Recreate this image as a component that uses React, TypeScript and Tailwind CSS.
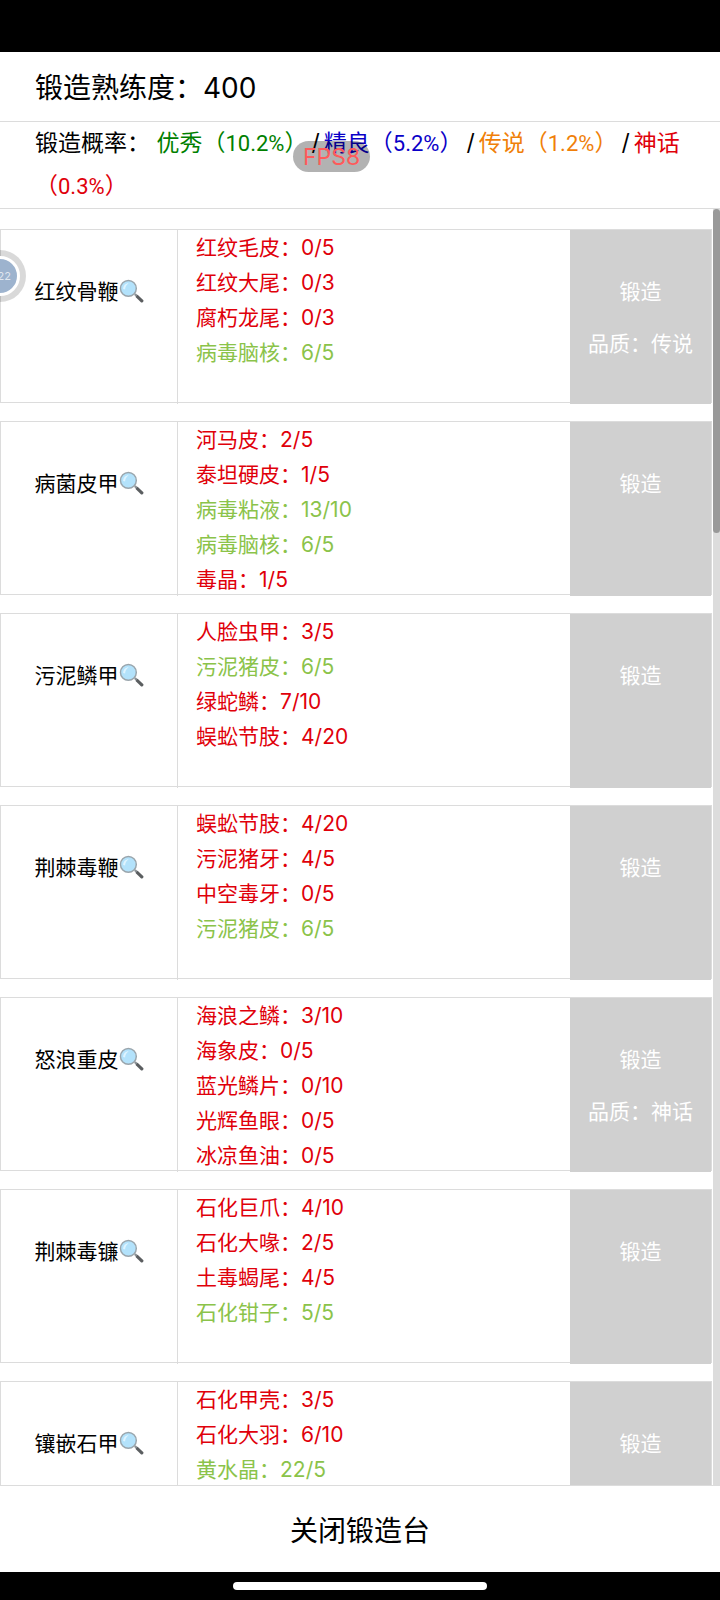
type Material = {
  name: string;
  have: number;
  need: number;
};

type Recipe = {
  name: string;
  quality?: string;
  materials: Material[];
};

const rates = [
  { label: '优秀', rate: '10.2%', color: 'text-[#008000]' },
  { label: '精良', rate: '5.2%', color: 'text-[#0a00c8]' },
  { label: '传说', rate: '1.2%', color: 'text-[#f07f09]' },
  { label: '神话', rate: '0.3%', color: 'text-[#e0000a]' },
];

const recipes: Recipe[] = [
  {
    name: '红纹骨鞭',
    quality: '传说',
    materials: [
      { name: '红纹毛皮', have: 0, need: 5 },
      { name: '红纹大尾', have: 0, need: 3 },
      { name: '腐朽龙尾', have: 0, need: 3 },
      { name: '病毒脑核', have: 6, need: 5 },
    ],
  },
  {
    name: '病菌皮甲',
    materials: [
      { name: '河马皮', have: 2, need: 5 },
      { name: '泰坦硬皮', have: 1, need: 5 },
      { name: '病毒粘液', have: 13, need: 10 },
      { name: '病毒脑核', have: 6, need: 5 },
      { name: '毒晶', have: 1, need: 5 },
    ],
  },
  {
    name: '污泥鳞甲',
    materials: [
      { name: '人脸虫甲', have: 3, need: 5 },
      { name: '污泥猪皮', have: 6, need: 5 },
      { name: '绿蛇鳞', have: 7, need: 10 },
      { name: '蜈蚣节肢', have: 4, need: 20 },
    ],
  },
  {
    name: '荆棘毒鞭',
    materials: [
      { name: '蜈蚣节肢', have: 4, need: 20 },
      { name: '污泥猪牙', have: 4, need: 5 },
      { name: '中空毒牙', have: 0, need: 5 },
      { name: '污泥猪皮', have: 6, need: 5 },
    ],
  },
  {
    name: '怒浪重皮',
    quality: '神话',
    materials: [
      { name: '海浪之鳞', have: 3, need: 10 },
      { name: '海象皮', have: 0, need: 5 },
      { name: '蓝光鳞片', have: 0, need: 10 },
      { name: '光辉鱼眼', have: 0, need: 5 },
      { name: '冰凉鱼油', have: 0, need: 5 },
    ],
  },
  {
    name: '荆棘毒镰',
    materials: [
      { name: '石化巨爪', have: 4, need: 10 },
      { name: '石化大喙', have: 2, need: 5 },
      { name: '土毒蝎尾', have: 4, need: 5 },
      { name: '石化钳子', have: 5, need: 5 },
    ],
  },
  {
    name: '镶嵌石甲',
    materials: [
      { name: '石化甲壳', have: 3, need: 5 },
      { name: '石化大羽', have: 6, need: 10 },
      { name: '黄水晶', have: 22, need: 5 },
    ],
  },
];

function Magnifier() {
  return (
    <svg viewBox="0 0 24 24" className="size-[25px] shrink-0" aria-hidden="true">
      <path d="M14.4 15.2l1.5-1.5 2.5 2.2-1.6 1.8z" fill="#8c9296" />
      <path d="M15.9 17.3l2-2.1 5.3 5c1.1 1.1-1.1 3.2-2.2 2.2z" fill="#5b5e60" />
      <circle cx="9" cy="9" r="7.6" fill="#b3e2fb" stroke="#9aa5ac" strokeWidth="1.4" />
      <path d="M4 9.5C4 6.3 6.2 4 9.3 4c-1.5 1.2-3.3 2.7-3.5 6z" fill="#dff4ff" />
    </svg>
  );
}

function RecipeRow({ recipe }: { recipe: Recipe }) {
  return (
    <li className="flex h-[174px] border border-[#dcdcdc]">
      <button
        type="button"
        className="flex h-[174px] w-[177px] shrink-0 items-start justify-center border-r border-[#dcdcdc] pt-11 leading-[35px] text-black"
      >
        {recipe.name}
        <span className="flex h-[35px] items-center">
          <Magnifier />
        </span>
      </button>
      <ul className="flex-1 pl-[18px] leading-[35px]">
        {recipe.materials.map(material => (
          <li
            key={material.name}
            className={material.have >= material.need ? 'text-[#8bc34a]' : 'text-[#e0000a]'}
          >
            {material.name}：{material.have}/{material.need}
          </li>
        ))}
      </ul>
      <button
        type="button"
        className="flex h-[174px] w-[141px] shrink-0 flex-col items-center bg-[#d0d0d0] pt-9 leading-[52px] text-white"
      >
        <span>锻造</span>
        {recipe.quality && <span>品质：{recipe.quality}</span>}
      </button>
    </li>
  );
}

export default function App() {
  return (
    <div className="relative flex h-screen flex-col overflow-hidden bg-white font-[Inter,'Noto_Sans_CJK_SC',sans-serif] text-[21px] text-black">
      <div className="h-[52px] shrink-0 bg-black" />

      <header className="shrink-0">
        <h1 className="border-b border-[#dcdcdc] px-[35px] pt-[3px] text-[28px] leading-[66px]">
          锻造熟练度：400
        </h1>
        <p className="border-b border-[#dcdcdc] pr-6 pl-[35px] text-[23px] leading-[42px]">
          锻造概率：{' '}
          {rates.map((item, i) => (
            <span key={item.label}>
              {i > 0 && <span className="mx-1">/</span>}
              <span className={item.color}>
                {item.label}（<span className="font-[Roboto,sans-serif] text-[22px]">{item.rate}</span>）
              </span>
            </span>
          ))}
        </p>
      </header>

      <main className="flex min-h-0 flex-1 border-b border-[#dcdcdc]">
        <ul className="flex flex-1 flex-col gap-[18px] overflow-hidden pt-5 pr-px">
          {recipes.map(recipe => (
            <RecipeRow key={recipe.name} recipe={recipe} />
          ))}
        </ul>
        <div className="w-[7px] shrink-0 bg-[#dcdcdc]">
          <div className="h-[324px] rounded-full bg-[#999999]" />
        </div>
      </main>

      <button type="button" className="shrink-0 pt-1 text-[28px] leading-[82px]">
        关闭锻造台
      </button>

      <div className="flex h-7 shrink-0 items-center justify-center bg-black">
        <div className="h-2 w-[254px] rounded-full bg-white" />
      </div>

      {/* fps counter */}
      <div className="absolute top-[141px] left-[293px] rounded-full bg-black/30 px-[10px] pt-px text-[23px] leading-[30px] text-[#ff5a5a]">
        FPS8
      </div>

      {/* floating ball docked to the left edge */}
      <div className="absolute top-[250px] -left-[26px] flex size-[52px] items-center justify-center rounded-full bg-black/15">
        <div className="flex size-10 items-center justify-end rounded-full border-3 border-white bg-[#9db3ce] pr-[6px] text-[11px] text-white/70">
          22
        </div>
      </div>
    </div>
  );
}
